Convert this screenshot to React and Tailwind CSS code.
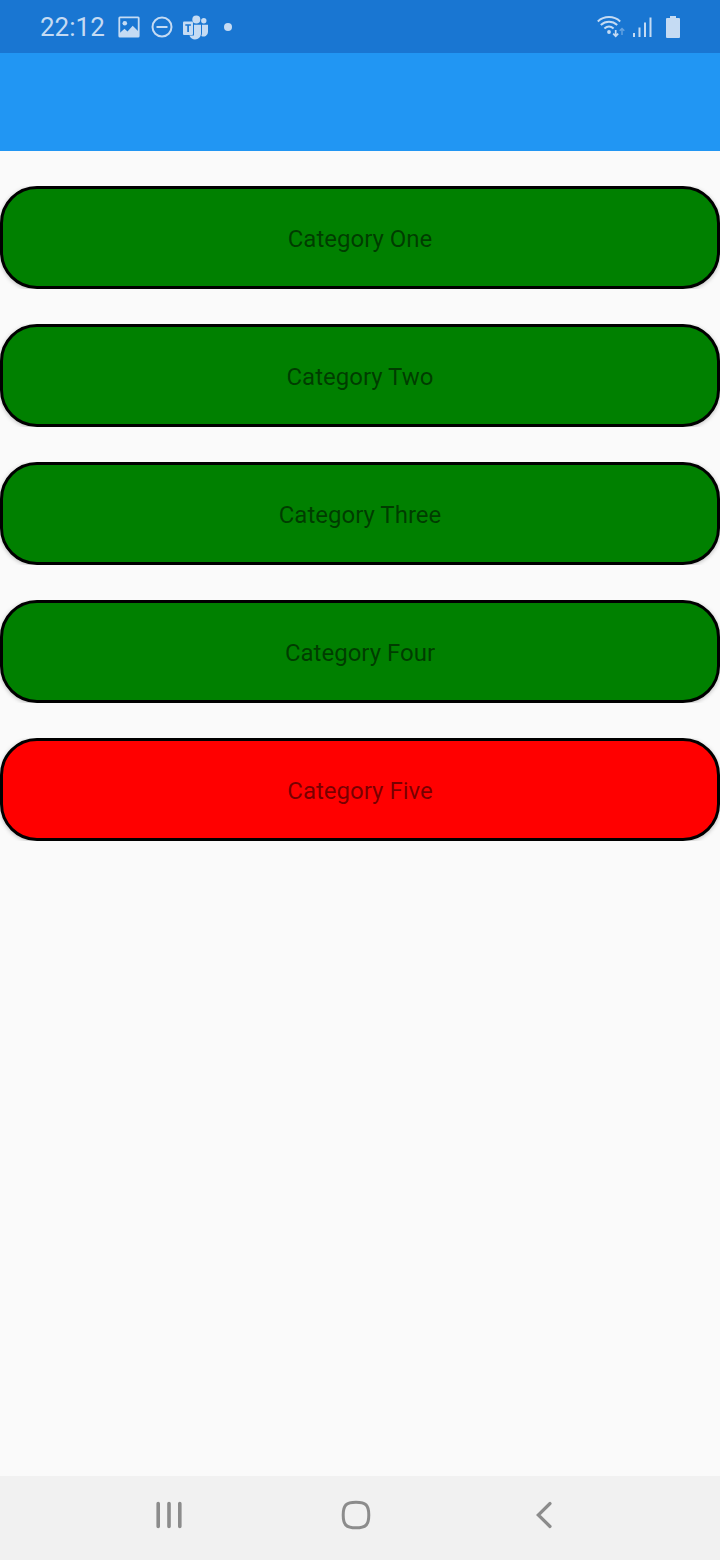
const categories = [
  { name: 'Category One', color: 'bg-[#008000]' },
  { name: 'Category Two', color: 'bg-[#008000]' },
  { name: 'Category Three', color: 'bg-[#008000]' },
  { name: 'Category Four', color: 'bg-[#008000]' },
  { name: 'Category Five', color: 'bg-[#ff0000]' },
];

function ImageIcon() {
  return (
    <svg className="h-[22px] w-[22px]" viewBox="0 0 22 22" fill="none" aria-hidden="true">
      <rect x="1.3" y="1.3" width="19.4" height="19.4" rx=".6" stroke="currentColor" strokeWidth="1.8" />
      <circle cx="6.8" cy="7.2" r="2.3" fill="currentColor" />
      <path d="M2 16.8 6.5 12.8l3 2.8 5.2-5.8 5.3 5.2v5H2z" fill="currentColor" />
    </svg>
  );
}

function DoNotDisturbIcon() {
  return (
    <svg className="h-[22px] w-[22px]" viewBox="0 0 22 22" fill="none" stroke="currentColor" strokeWidth="2" aria-hidden="true">
      <circle cx="11" cy="11" r="9.5" />
      <path d="M5.5 11h11" />
    </svg>
  );
}

function TeamsIcon() {
  return (
    <svg className="h-[25px] w-[26px]" viewBox="0 0 26 25" aria-hidden="true">
      <g fill="currentColor">
        <circle cx="13.3" cy="4.5" r="4" />
        <circle cx="20.8" cy="5.7" r="2.7" />
        <path d="M11 9.7h7v8.3a6 6 0 0 1-9.6 5.2c-1-.8-1.6-1.6-2-2.7H11z" />
        <path d="M19 9.7h6v7.3a4.5 4.5 0 0 1-6.7 4c.5-1 .7-2 .7-3z" />
        <rect x="0" y="6.6" width="10" height="13.4" rx="1" />
      </g>
      <path d="M2.3 10h5.6M5.1 10v7" stroke="#1976d2" strokeWidth="1.7" fill="none" />
    </svg>
  );
}

function WifiIcon() {
  return (
    <svg className="h-6 w-7" viewBox="0 0 28 24" fill="none" stroke="currentColor" strokeWidth="2" aria-hidden="true">
      <path d="M.8 6.4c6.4-5.8 16-5.8 22.4 0M3.8 10c4.8-4.3 11.6-4.3 16.4 0M7.4 13.4c2.8-2.4 6.4-2.4 9.2 0" />
      <circle cx="12" cy="17" r="1.9" fill="currentColor" stroke="none" />
      <path d="M18.7 15v6.2M16.2 18.7l2.5 2.5 2.5-2.5" strokeWidth="1.7" />
      <path d="M25 20v-6.5M22.7 15.8l2.3-2.3 2.3 2.3" strokeWidth="1.4" opacity=".45" />
    </svg>
  );
}

function SignalIcon() {
  return (
    <svg className="h-[22px] w-[19px]" viewBox="0 0 19 22" stroke="currentColor" strokeWidth="2" aria-hidden="true">
      <path d="M1 17v4M6.5 11.5V21M12 6.500V21M17.500 1.500V21" />
    </svg>
  );
}

function BatteryIcon() {
  return (
    <svg className="h-[22px] w-3.5" viewBox="0 0 14 22" fill="currentColor" aria-hidden="true">
      <path d="M4 0h6v2h3a1 1 0 0 1 1 1v18a1 1 0 0 1-1 1H1a1 1 0 0 1-1-1V3a1 1 0 0 1 1-1h3z" />
    </svg>
  );
}

function StatusBar() {
  return (
    <div className="flex h-[53px] items-center justify-between bg-[#1976d2] pt-px px-10 text-[#c5dbf3]">
      <div className="flex items-center">
        <time className="mr-[13px] text-[26px] leading-8">22:12</time>
        <div className="flex items-center gap-[11px]">
          <ImageIcon />
          <DoNotDisturbIcon />
        </div>
        <div className="ml-2.5 flex items-center gap-[15px]">
          <TeamsIcon />
          <span className="size-2 rounded-full bg-current" />
        </div>
      </div>
      <div className="flex items-center">
        <WifiIcon />
        <div className="ml-2 flex items-center gap-3.5">
          <SignalIcon />
          <BatteryIcon />
        </div>
      </div>
    </div>
  );
}

function NavigationBar() {
  return (
    <nav aria-label="System" className="grid h-21 grid-cols-3 bg-[#f1f1f1] pr-[82px] pb-1.5 pl-[75px] text-[#8c8c8c]">
      <button type="button" aria-label="Recent apps" className="flex items-center justify-center">
        <svg className="h-7 w-[26px]" viewBox="0 0 26 28" stroke="currentColor" strokeWidth="3.6" strokeLinecap="round">
          <path d="M2.200 2.500v23M13 2.500v23M23.800 2.500v23" />
        </svg>
      </button>
      <button type="button" aria-label="Home" className="flex items-center justify-center">
        <svg className="size-[30px]" viewBox="0 0 30 30" fill="none" stroke="currentColor" strokeWidth="3">
          <path d="M15 2.2c9.8 0 12.8 3 12.8 12.8s-3 12.8-12.8 12.8S2.2 24.8 2.2 15 5.2 2.2 15 2.2z" />
        </svg>
      </button>
      <button type="button" aria-label="Back" className="flex items-center justify-center">
        <svg className="h-7 w-4" viewBox="0 0 16 28" fill="none" stroke="currentColor" strokeWidth="3.2" strokeLinecap="round">
          <path d="M14 2.5 2.3 14 14 25.5" />
        </svg>
      </button>
    </nav>
  );
}

export default function App() {
  return (
    <div className="flex min-h-screen flex-col bg-[#fafafa] font-[Roboto,sans-serif]">
      <StatusBar />
      <header className="h-[98px] bg-[#2196f3]" />
      <main className="flex-1 py-[35px]">
        <ul className="flex flex-col gap-[35px]">
          {categories.map(({ name, color }) => (
            <li key={name} className="overflow-hidden">
              <button
                type="button"
                className={`flex h-[103px] w-full items-center justify-center rounded-[37px] border-3 border-black pt-0.5 text-2xl text-black/54 shadow-[0_1px_4px_rgba(0,0,0,0.25)] ${color}`}
              >
                {name}
              </button>
            </li>
          ))}
        </ul>
      </main>
      <NavigationBar />
    </div>
  );
}
